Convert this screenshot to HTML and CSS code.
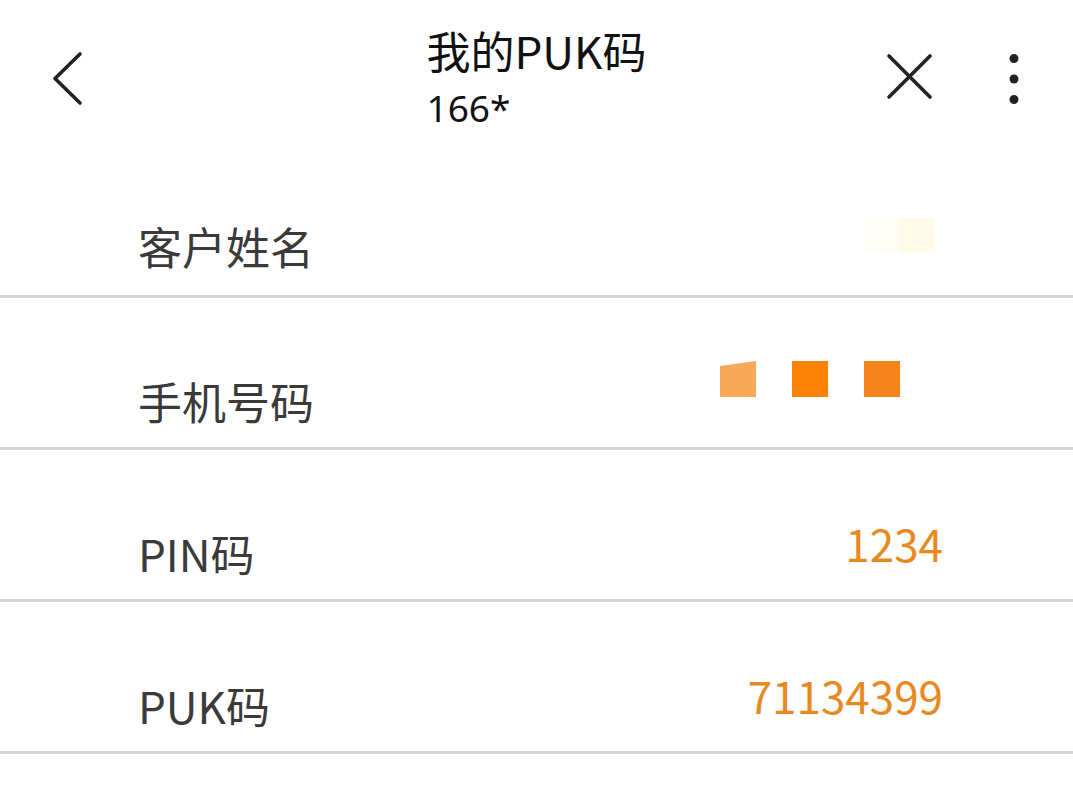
FILE: index.html
```html
<!DOCTYPE html>
<html lang="zh-CN">
<head>
<meta charset="utf-8">
<title>我的PUK码</title>
<link rel="stylesheet" href="styles.css">
</head>
<body>
<div class="page">
  <header class="header">
    <div class="hd-left">
      <svg class="ic-back" width="36" height="58" viewBox="50 50 36 58" aria-hidden="true">
        <polyline points="80,54 55,78.5 80,103" fill="none" stroke="#222" stroke-width="3.6" stroke-linecap="round" stroke-linejoin="round"/>
      </svg>
    </div>
    <div class="hd-title">
      <div class="title">我的PUK码</div>
      <div class="subtitle">166*</div>
    </div>
    <div class="hd-right">
      <svg class="ic-right" width="145" height="60" viewBox="880 48 145 60" aria-hidden="true">
        <line x1="889" y1="56" x2="930" y2="97" stroke="#222" stroke-width="3.6" stroke-linecap="round"/>
        <line x1="930" y1="56" x2="889" y2="97" stroke="#222" stroke-width="3.6" stroke-linecap="round"/>
        <circle cx="1014" cy="58.5" r="4.5" fill="#222"/>
        <circle cx="1014" cy="79" r="4.5" fill="#222"/>
        <circle cx="1014" cy="99.5" r="4.5" fill="#222"/>
      </svg>
    </div>
  </header>

  <div class="list">
    <div class="row row-first">
      <div class="label">客户姓名</div>
      <div class="value mask mask-name">
        <span class="blk blk-faint"></span><span class="blk blk-cream"></span>
      </div>
    </div>
    <div class="row">
      <div class="label">手机号码</div>
      <div class="value mask mask-phone">
        <span class="blk blk-o1"></span><span class="blk blk-o2"></span><span class="blk blk-o3"></span>
      </div>
    </div>
    <div class="row">
      <div class="label">PIN码</div>
      <div class="value num">1234</div>
    </div>
    <div class="row">
      <div class="label">PUK码</div>
      <div class="value num">71134399</div>
    </div>
  </div>
</div>
</body>
</html>
```
FILE: styles.css
```css
html, body {
  margin: 0;
  padding: 0;
  background: #ffffff;
}
body {
  font-family: "Noto Sans CJK SC", "Noto Sans", sans-serif;
  color: #222;
}
.page {
  width: 1073px;
  height: 789px;
  overflow: hidden;
  background: #fff;
}
.header {
  display: grid;
  grid-template-columns: 1fr auto 1fr;
  height: 142px;
}
.hd-left {
  padding-left: 50px;
  padding-top: 50px;
}
.ic-back, .ic-right {
  display: block;
}
.hd-right {
  justify-self: end;
  padding-right: 48px;
  padding-top: 48px;
}
.hd-title {
  padding-top: 24px;
}
.title {
  font-size: 44px;
  line-height: 52px;
  color: #111;
}
.subtitle {
  font-family: "Noto Sans", sans-serif;
  font-size: 37px;
  line-height: 40px;
  color: #111;
  margin-top: 12px;
}
.list {
  display: flex;
  flex-direction: column;
}
.row {
  display: flex;
  justify-content: space-between;
  align-items: flex-start;
  border-bottom: 3px solid #d3d3d3;
  padding: 0 130px 0 138px;
  box-sizing: border-box;
  height: 152px;
}
.row-first {
  height: 156px;
}
.label {
  font-size: 44px;
  line-height: 52px;
  color: #3a3a3a;
  margin-top: 77px;
}
.row-first .label {
  margin-top: 78px;
}
.num {
  font-size: 44px;
  line-height: 50px;
  color: #e8891f;
  margin-top: 68px;
}
.mask {
  display: flex;
  gap: 0;
}
.mask-name {
  margin-top: 76px;
  padding-right: 8px;
}
.mask-phone {
  margin-top: 63px;
  gap: 36px;
  padding-right: 43px;
}
.blk {
  display: block;
  width: 36px;
  height: 36px;
}
.blk-faint {
  width: 35px;
  height: 34px;
  background: #fffdf5;
}
.blk-cream {
  width: 35px;
  height: 34px;
  background: #fffbe8;
}
.blk-o1 {
  background: #f7a95a;
  clip-path: polygon(0 14%, 100% 0, 100% 100%, 0 100%);
}
.blk-o2 {
  background: #fb8205;
}
.blk-o3 {
  background: #f5851b;
}
```
